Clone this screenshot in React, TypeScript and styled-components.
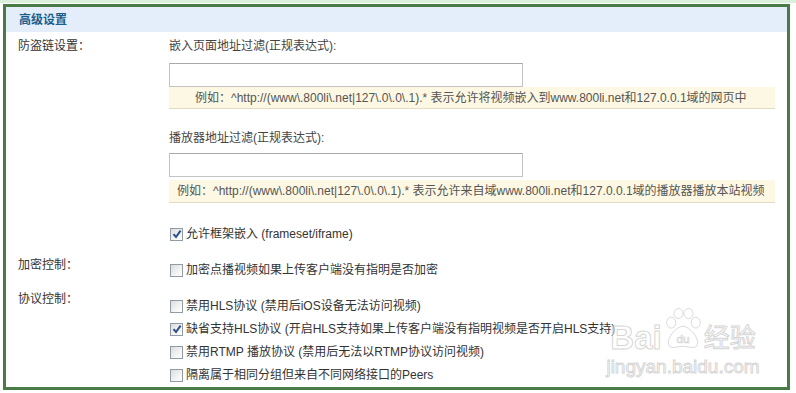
import React from "react";
import styled, { createGlobalStyle } from "styled-components";

const Global = createGlobalStyle`
  html, body { margin: 0; padding: 0; background: #fff; }
  body { font-family: "Liberation Sans", "Noto Sans CJK SC", sans-serif; font-size: 12px; color: #333; }
  * { box-sizing: border-box; }
`;

const Page = styled.div`
  width: 796px;
  height: 393px;
  border-top: 3px solid #dcefdc;
  padding: 1px 6px 0 3px;
  position: relative;
`;

const Frame = styled.div`
  width: 787px;
  height: 386px;
  border: 3px solid #4a7a45;
  display: flex;
  flex-direction: column;
`;

const Header = styled.div`
  height: 25px;
  background: #e3eefa;
  padding-left: 13px;
  display: flex;
  align-items: center;
  font-weight: bold;
  color: #1c5d8c;
  font-size: 12px;
  line-height: 16px;
`;

const Body = styled.div`
  display: flex;
  flex-direction: column;
`;

const Row = styled.div<{ $top: number }>`
  display: grid;
  grid-template-columns: 163px 1fr;
  margin-top: ${(p) => p.$top}px;
`;

const Label = styled.div`
  padding-left: 12px;
  line-height: 16px;
  color: #333;
`;

const Field = styled.div<{ $pad?: number }>`
  display: flex;
  flex-direction: column;
  padding-top: ${(p) => p.$pad ?? 0}px;
`;

const Title = styled.div<{ $top?: number }>`
  line-height: 16px;
  color: #444;
  margin-top: ${(p) => p.$top ?? 0}px;
`;

const Input = styled.input<{ $top: number }>`
  width: 354px;
  height: 24px;
  margin: ${(p) => p.$top}px 0 0 0;
  border: 1px solid #c4c4c4;
  border-top-color: #a9a9a9;
  background: #fff;
  outline: none;
  padding: 0 4px;
  font: inherit;
`;

const Hint = styled.div<{ $top: number; $indent: number; $h: number }>`
  width: 606px;
  height: ${(p) => p.$h}px;
  margin-top: ${(p) => p.$top}px;
  padding-left: ${(p) => p.$indent}px;
  background: #fdf8e3;
  border-bottom: 1px solid #e2dcc2;
  color: #555;
  display: flex;
  align-items: center;
  line-height: 16px;
  white-space: nowrap;
`;

const CheckRow = styled.label<{ $top?: number }>`
  display: flex;
  align-items: center;
  height: 18px;
  margin-top: ${(p) => p.$top ?? 0}px;
  padding-left: 1px;
  color: #333;
  line-height: 16px;
  white-space: nowrap;
`;

const Box = styled.span`
  width: 13px;
  height: 13px;
  border: 1px solid #8f9ba5;
  background: linear-gradient(135deg, #dcdcdc 0%, #f4f4f4 60%, #ffffff 100%);
  margin-right: 3px;
  display: inline-flex;
  align-items: center;
  justify-content: center;
  flex: none;
`;

const Watermark = styled.div`
  position: absolute;
  left: 610px;
  top: 300px;
  width: 146px;
  pointer-events: none;
  display: flex;
  flex-direction: column;
  align-items: center;
  color: rgba(255, 255, 255, 0.45);
  -webkit-text-stroke: 1px rgba(200, 200, 200, 0.75);
  font-family: "Liberation Sans", "Noto Sans CJK SC", sans-serif;
  white-space: nowrap;
`;

const MarkTop = styled.div`
  display: flex;
  align-items: flex-end;
  height: 50px;
`;

const MarkBig = styled.span`
  font-size: 33px;
  line-height: 30px;
  font-weight: bold;
  white-space: nowrap;
`;

const MarkCn = styled.span`
  font-size: 26px;
  line-height: 30px;
  white-space: nowrap;
`;

const MarkUrl = styled.div`
  font-size: 19px;
  line-height: 20px;
  margin-top: 4px;
`;

const Check = ({ checked }: { checked?: boolean }) => (
  <Box>
    {checked && (
      <svg width="10" height="10" viewBox="0 0 10 10">
        <path d="M1.5 5.2 L4 8 L8.6 1.6" fill="none" stroke="#2a4f8c" strokeWidth="2" />
      </svg>
    )}
  </Box>
);

const Paw = () => (
  <svg width="40" height="48" viewBox="0 0 44 46" style={{ margin: "0 1px", flex: "none" }}>
    <g fill="rgba(255,255,255,0.45)" stroke="rgba(200,200,200,0.75)" strokeWidth="1">
      <ellipse cx="9" cy="16" rx="5" ry="6" />
      <ellipse cx="17" cy="6" rx="5" ry="5.5" />
      <ellipse cx="28" cy="6" rx="5" ry="5.5" />
      <ellipse cx="36" cy="16" rx="5" ry="6" />
      <path d="M22 20 C30 20 40 34 38 40 C36 46 28 42 22 42 C16 42 8 46 6 40 C4 34 14 20 22 20 Z" />
    </g>
    <text x="22" y="38" textAnchor="middle" fontSize="13" fontFamily="Liberation Sans, sans-serif" fill="rgba(255,255,255,0.45)" stroke="rgba(200,200,200,0.75)" strokeWidth="0.8">du</text>
  </svg>
);

export default function App() {
  return (
    <>
      <Global />
      <Page>
        <Frame>
          <Header>高级设置</Header>
          <Body>
            <Row $top={6}>
              <Label>防盗链设置：</Label>
              <Field>
                <Title>嵌入页面地址过滤(正规表达式):</Title>
                <Input $top={9} type="text" />
                <Hint $top={0} $indent={26} $h={22}>
                  例如：^http://(www\.800li\.net|127\.0\.0\.1).* 表示允许将视频嵌入到www.800li.net和127.0.0.1域的网页中
                </Hint>
                <Title $top={21}>播放器地址过滤(正规表达式):</Title>
                <Input $top={7} type="text" />
                <Hint $top={3} $indent={8} $h={23}>
                  例如：^http://(www\.800li\.net|127\.0\.0\.1).* 表示允许来自域www.800li.net和127.0.0.1域的播放器播放本站视频
                </Hint>
                <CheckRow $top={22}>
                  <Check checked />
                  允许框架嵌入 (frameset/iframe)
                </CheckRow>
              </Field>
            </Row>
            <Row $top={14}>
              <Label>加密控制：</Label>
              <Field $pad={4}>
                <CheckRow>
                  <Check />
                  加密点播视频如果上传客户端没有指明是否加密
                </CheckRow>
              </Field>
            </Row>
            <Row $top={12}>
              <Label>协议控制：</Label>
              <Field $pad={6}>
                <CheckRow>
                  <Check />
                  禁用HLS协议 (禁用后iOS设备无法访问视频)
                </CheckRow>
                <CheckRow $top={5}>
                  <Check checked />
                  缺省支持HLS协议 (开启HLS支持如果上传客户端没有指明视频是否开启HLS支持)
                </CheckRow>
                <CheckRow $top={5}>
                  <Check />
                  禁用RTMP 播放协议 (禁用后无法以RTMP协议访问视频)
                </CheckRow>
                <CheckRow $top={5}>
                  <Check />
                  隔离属于相同分组但来自不同网络接口的Peers
                </CheckRow>
              </Field>
            </Row>
          </Body>
        </Frame>
        <Watermark>
          <MarkTop>
            <MarkBig>Bai</MarkBig>
            <Paw />
            <MarkCn>经验</MarkCn>
          </MarkTop>
          <MarkUrl>jingyan.baidu.com</MarkUrl>
        </Watermark>
      </Page>
    </>
  );
}
